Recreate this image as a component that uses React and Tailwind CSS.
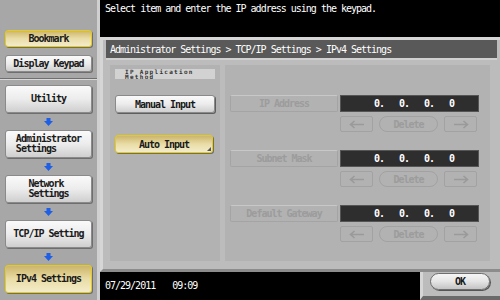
import React from 'react';

const mono = "font-['DejaVu_Sans_Mono','Liberation_Mono',monospace] tracking-[-1px]";

function DownArrow() {
  return (
    <div className="flex justify-center h-[17px] items-center">
      <svg width="9" height="8" viewBox="0 0 9 8">
        <rect x="2.5" y="0" width="4" height="3" fill="#1f5fe6" />
        <polygon points="0,3 9,3 4.5,8" fill="#1f5fe6" />
      </svg>
    </div>
  );
}

function SideButton({lines, active, h = 'h-[28px]'}) {
  const look = active
    ? 'border-[#e8cc10] bg-gradient-to-b from-[#cdb66a] via-[#e9dca6] to-[#f3ecc9]'
    : 'border-[#8a8a8a] bg-gradient-to-b from-[#fafafa] via-[#ececec] to-[#cfcfcf]';
  return (
    <div className={`mx-[5px] ${h} rounded-[3px] border ${look} shadow-[1px_1px_0_#6e6e6e] flex items-center justify-center`}>
      <span className={`${mono} text-[10px] leading-[10px] font-bold text-[#1a1a1a] text-left`}>
        {lines.map((l, i) => (
          <span key={i} className="block whitespace-pre">{l}</span>
        ))}
      </span>
    </div>
  );
}

function ArrowBox({dir}) {
  return (
    <div className="w-[33px] h-[16px] rounded-[2px] border border-[#a2a2a2] flex items-center justify-center">
      <svg width="16" height="9" viewBox="0 0 16 9">
        {dir === 'left' ? (
          <path d="M15 4.5 H2 M5.5 1 L1.5 4.5 L5.5 8" stroke="#9a9a9a" strokeWidth="1.6" fill="none" />
        ) : (
          <path d="M1 4.5 H14 M10.5 1 L14.5 4.5 L10.5 8" stroke="#9a9a9a" strokeWidth="1.6" fill="none" />
        )}
      </svg>
    </div>
  );
}

function AddressRow({label}) {
  return (
    <div className="flex flex-col">
      <div className="flex items-center gap-[2px]">
        <div className="w-[108px] h-[17px] rounded-[2px] border border-[#a4a4a4] border-t-[#c8c8c8] flex items-center justify-center">
          <span className={`${mono} text-[10px] font-bold text-[#9c9c9c]`}>{label}</span>
        </div>
        <div className="w-[139px] h-[17px] bg-[#2e2e2e] border border-[#555] flex items-center pl-[33px]">
          {['0.', '0.', '0.', '0'].map((v, i) => (
            <span key={i} className={`${mono} w-[25px] text-[10px] font-bold text-white`}>{v}</span>
          ))}
        </div>
      </div>
      <div className="flex items-center mt-[4px] ml-[110px] gap-[6px]">
        <ArrowBox dir="left" />
        <div className="w-[59px] h-[16px] rounded-full border border-[#a2a2a2] flex items-center justify-center">
          <span className={`${mono} text-[10px] font-bold text-[#9c9c9c]`}>Delete</span>
        </div>
        <ArrowBox dir="right" />
      </div>
    </div>
  );
}

export default function App() {
  return (
    <div className="w-[500px] h-[300px] flex bg-black overflow-hidden">
      {/* Sidebar */}
      <div className="w-[100px] h-full bg-[#a7a7a7] border-r-[3px] border-r-[#d0d0d0] flex flex-col">
        <div className="h-[79px] pt-[30px] flex flex-col gap-[8px] border-b border-b-[#6f6f6f]">
          <SideButton lines={['Bookmark']} active h="h-[17px]" />
          <SideButton lines={['Display Keypad']} h="h-[17px]" />
        </div>
        <div className="border-t border-t-[#d8d8d8] pt-[5px] flex flex-col">
          <SideButton lines={['Utility']} />
          <DownArrow />
          <SideButton lines={['Administrator', 'Settings']} />
          <DownArrow />
          <SideButton lines={['Network', 'Settings']} />
          <DownArrow />
          <SideButton lines={['TCP/IP Setting']} />
          <DownArrow />
          <SideButton lines={['IPv4 Settings']} active />
        </div>
      </div>

      {/* Main */}
      <div className="flex-1 flex flex-col">
        <div className="h-[37px] px-[5px] pt-[4px]">
          <span className={`${mono} text-[10px] leading-[10px] text-white whitespace-pre block`}>
            Select item and enter the IP address using the keypad.
          </span>
        </div>

        <div className="h-[235px] bg-[#bcbcbc] border-t-[3px] border-l-[3px] border-[#d6d6d6] border-b-[3px] border-b-[#8c8c8c] pl-[3px] pr-[3px] flex flex-col">
          <div className="h-[20px] bg-[#595959] border-b-2 border-[#d0d0d0] flex items-center pl-[4px]">
            <span className={`${mono} text-[10px] text-white whitespace-pre`}>
              Administrator Settings &gt; TCP/IP Settings &gt; IPv4 Settings
            </span>
          </div>
          <div className="flex gap-[5px] pl-[4px] pt-[5px] h-[201px]">
            {/* left sub panel */}
            <div className="w-[110px] h-full bg-[#b2b2b2] flex flex-col px-[5px] pt-[4px]">
              <div className="h-[10px] bg-[#d2d2d2] pl-[10px]">
                <span className={`${mono} tracking-[1.3px] text-[6px] leading-[5px] font-bold text-[#333] block`}>
                  IP Application<br />Method
                </span>
              </div>
              <div className="mt-[16px] h-[18px] rounded-[3px] border border-[#8a8a8a] bg-gradient-to-b from-[#fafafa] via-[#ececec] to-[#cfcfcf] shadow-[1px_1px_0_#5e5e5e] flex items-center justify-center">
                <span className={`${mono} text-[10px] font-bold text-[#1a1a1a]`}>Manual Input</span>
              </div>
              <div className="relative mt-[22px] h-[18px] w-[98px] rounded-[3px] border border-[#e8cc10] bg-gradient-to-b from-[#cdb66a] via-[#e9dca6] to-[#f3ecc9] shadow-[1px_1px_0_#6e6e6e] flex items-center justify-center">
                <span className={`${mono} text-[10px] font-bold text-[#1a1a1a]`}>Auto Input</span>
                <div className="absolute right-[1px] bottom-[1px] w-0 h-0 border-l-[4px] border-l-transparent border-b-[4px] border-b-[#555]" />
              </div>
            </div>
            {/* right sub panel */}
            <div className="w-[265px] h-full bg-[#b2b2b2] pl-[5px] pt-[30px] flex flex-col gap-[18px]">
              <AddressRow label="IP Address" />
              <AddressRow label="Subnet Mask" />
              <AddressRow label="Default Gateway" />
            </div>
          </div>
        </div>

        <div className="flex-1 flex">
          <div className="flex-1 flex items-center pl-[5px] gap-[17px] pb-[1px]">
            <span className={`${mono} text-[10px] text-white`}>07/29/2011</span>
            <span className={`${mono} text-[10px] text-white`}>09:09</span>
          </div>
          <div className="w-[80px] bg-[#bcbcbc] border-l-[3px] border-[#d6d6d6] border-b-[4px] border-b-[#6a6a6a] flex items-start pl-[7px] pt-[1px]">
            <div className="w-[60px] h-[17px] rounded-full border border-[#6e6e6e] bg-gradient-to-b from-[#f6f6f6] via-[#e4e4e4] to-[#c4c4c4] shadow-[1px_1px_0_#555] flex items-center justify-center">
              <span className={`${mono} text-[10px] font-bold text-[#1a1a1a]`}>OK</span>
            </div>
          </div>
        </div>
      </div>
    </div>
  );
}
